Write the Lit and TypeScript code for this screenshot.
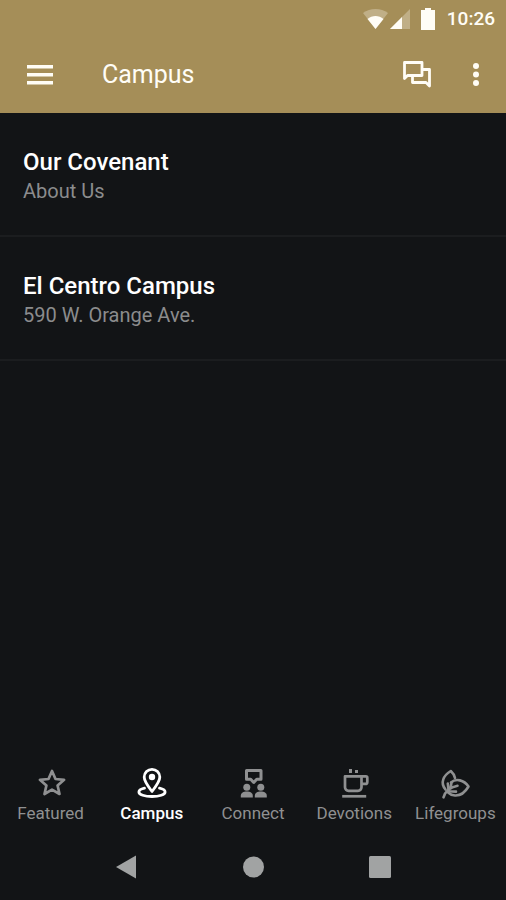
import { LitElement, html, css, svg, type TemplateResult } from "lit";
import { customElement, state } from "lit/decorators.js";
import { classMap } from "lit/directives/class-map.js";

interface Tab {
  label: string;
  icon: TemplateResult;
}

interface Entry {
  title: string;
  detail: string;
}

const entries: Entry[] = [
  { title: "Our Covenant", detail: "About Us" },
  { title: "El Centro Campus", detail: "590 W. Orange Ave." },
];

const star = svg`
  <path d="M17 4l3.500 8 8.600.8-6.500 5.700 1.900 8.500-7.500-4.400-7.500 4.400 1.900-8.500-6.500-5.700 8.600-.8z"
    fill="none" stroke="currentColor" stroke-width="2.700" stroke-linejoin="round" />`;

const pin = svg`
  <g fill="none" stroke="currentColor" stroke-width="2.800" stroke-linejoin="round" stroke-linecap="round">
    <path d="M16 24.500c-4-5.200-7.800-9.800-7.800-14.400a7.800 7.800 0 0 1 15.600 0c0 4.600-3.800 9.200-7.800 14.400z" />
    <path d="M8.500 21.200c-3.400.8-5.600 2-5.600 3.700 0 2.800 5.900 4.600 13.100 4.600s13.100-1.800 13.100-4.600c0-1.700-2.200-2.900-5.600-3.700" />
  </g>
  <circle cx="16" cy="10" r="3.200" fill="currentColor" />`;

const connect = svg`
  <path d="M9.500 3.500h14.500v8.800h-4.300l-3 3.200-3-3.200H9.500z" fill="none" stroke="currentColor"
    stroke-width="3" stroke-linejoin="round" />
  <g fill="currentColor">
    <circle cx="9.800" cy="20.200" r="3.500" />
    <circle cx="23.800" cy="20.200" r="3.500" />
    <path d="M3.800 30.500v-1.700c0-2.800 2.700-4.200 6-4.200s6 1.400 6 4.200v1.700z" />
    <path d="M17.800 30.500v-1.700c0-2.800 2.700-4.200 6-4.200s6 1.400 6 4.200v1.700z" />
  </g>`;

const cup = svg`
  <g fill="none" stroke="currentColor" stroke-width="2.700">
    <path d="M7 9.300h16.500v11a3.500 3.500 0 0 1-3.500 3.500h-9.500A3.500 3.500 0 0 1 7 20.300z" stroke-linejoin="round" />
    <path d="M23.500 9.300h4.400a1.400 1.400 0 0 1 1.400 1.400v4.200a2 2 0 0 1-2 2h-3.800" />
    <path d="M4.200 29.300h24" />
    <path d="M12.500 2v4M18.500 3v3" stroke-width="3" />
  </g>`;

const leaves = svg`
  <g fill="none" stroke="currentColor" stroke-width="2.600" stroke-linecap="round" stroke-linejoin="round">
    <path d="M6.500 22.500C.8 15.500 4.500 8.500 11.800 4c2 1.800 3.700 4.300 4.200 7" />
    <path d="M12 15.500c5-4.500 13-2.500 17.500 4-3.800 6.500-8.500 9.300-13.500 9-2.700-.1-5-1.200-6.800-3" />
    <path d="M4.500 30.300c1.500-5.300 5.500-9.800 14-11.600M8.800 16.500l.7 6.300M9.500 24.300l7.500.3M11.500 21.500l1-6" />
  </g>`;

const tabs: Tab[] = [
  { label: "Featured", icon: star },
  { label: "Campus", icon: pin },
  { label: "Connect", icon: connect },
  { label: "Devotions", icon: cup },
  { label: "Lifegroups", icon: leaves },
];

@customElement("app-root")
export class AppRoot extends LitElement {
  @state() private selected = "Campus";

  static styles = css`
    :host {
      display: flex;
      flex-direction: column;
      min-height: 100vh;
      background: #121416;
      color: #fff;
      font-family: Roboto, "Liberation Sans", sans-serif;
    }
    * {
      box-sizing: border-box;
    }
    svg {
      display: block;
    }
    button {
      display: flex;
      align-items: center;
      justify-content: center;
      margin: 0;
      padding: 0;
      border: 0;
      background: none;
      color: inherit;
      font: inherit;
      cursor: pointer;
    }
    .top {
      background: #a58e58;
      color: #fffdf6;
    }
    .status {
      display: flex;
      align-items: center;
      justify-content: flex-end;
      height: 37px;
      padding-right: 11px;
    }
    .clock {
      margin-left: 10px;
      font-size: 19px;
      font-weight: 500;
      line-height: 24px;
    }
    .bar {
      display: flex;
      align-items: center;
      height: 76px;
      padding: 0 12px 0 16px;
    }
    .action {
      width: 48px;
      height: 48px;
    }
    .more {
      width: 36px;
      margin-left: 17px;
    }
    .title {
      flex: 1;
      margin: 0 0 0 38px;
      font-size: 25px;
      font-weight: 400;
      line-height: 32px;
    }
    .list {
      flex: 1;
      margin: 0;
      padding: 0;
      list-style: none;
    }
    .entry {
      border-bottom: 2px solid #1b1d1f;
    }
    .link {
      display: block;
      padding: 35px 23px 29px;
      color: inherit;
      text-decoration: none;
    }
    .name {
      display: block;
      font-size: 24px;
      font-weight: 500;
      line-height: 28px;
    }
    .detail {
      display: block;
      color: #8b8c8d;
      font-size: 20px;
      line-height: 30px;
    }
    .tabs {
      display: grid;
      grid-template-columns: repeat(5, 1fr);
    }
    .tab {
      flex-direction: column;
      color: #8f9091;
      font-size: 17px;
      line-height: 20px;
      gap: 4px;
      height: 78px;
    }
    .active {
      color: #fff;
      font-weight: 500;
    }
    .system {
      display: grid;
      grid-template-columns: repeat(3, 25%);
      justify-content: center;
      height: 66px;
      color: #a1a3a3;
    }
  `;

  render() {
    return html`
      <header class="top">
        <div class="status">
          <svg width="74" height="24" viewBox="0 0 74 24" fill="currentColor" aria-hidden="true">
            <path d="M0 6C7 .5 18 .5 25 6L12.500 22z" opacity=".3" />
            <path d="M4.500 12c4.500-4 11.500-4 16 0l-8 10z" />
            <path d="M47 2v20H27z" opacity=".3" />
            <path d="M39 10v12H27z" />
            <path d="M58 3h4V1h6v2h4v20H58z" />
          </svg>
          <span class="clock">10:26</span>
        </div>
        <div class="bar">
          <button class="action" aria-label="Open menu">
            <svg width="28" height="20" viewBox="0 0 28 20" fill="currentColor">
              <path d="M1 0h26v3.500H1zM1 8h26v3.500H1zM1 16h26v3.500H1z" />
            </svg>
          </button>
          <h1 class="title">Campus</h1>
          <button class="action" aria-label="Messages">
            <svg width="30" height="30" viewBox="0 0 30 30" fill="none" stroke="currentColor"
              stroke-width="2.800" stroke-linejoin="round">
              <path d="M2.500 18.500V2.500h17.500v13H5.500z" />
              <path d="M20 9.500h7.500v16.500l-3.500-3.500H10.500V16" />
            </svg>
          </button>
          <button class="action more" aria-label="More options">
            <svg width="8" height="24" viewBox="0 0 8 24" fill="currentColor">
              <circle cx="4" cy="3" r="3" />
              <circle cx="4" cy="11.500" r="3" />
              <circle cx="4" cy="20" r="3" />
            </svg>
          </button>
        </div>
      </header>

      <ul class="list">
        ${entries.map(
          (entry) => html`
            <li class="entry">
              <a class="link" href="#">
                <span class="name">${entry.title}</span>
                <span class="detail">${entry.detail}</span>
              </a>
            </li>
          `,
        )}
      </ul>

      <nav class="tabs" aria-label="Sections">
        ${tabs.map(
          (tab) => html`
            <button
              class=${classMap({ tab: true, active: tab.label === this.selected })}
              @click=${() => (this.selected = tab.label)}
            >
              <svg width="32" height="32" viewBox="0 0 32 32" aria-hidden="true">${tab.icon}</svg>
              <span>${tab.label}</span>
            </button>
          `,
        )}
      </nav>

      <div class="system">
        <button aria-label="Back">
          <svg width="24" height="24" viewBox="0 0 24 24" fill="currentColor"><path d="M1 12L21 0.500v23z" /></svg>
        </button>
        <button aria-label="Home">
          <svg width="24" height="24" viewBox="0 0 24 24" fill="currentColor"><circle cx="12.500" cy="12" r="10.500" /></svg>
        </button>
        <button aria-label="Recent apps">
          <svg width="24" height="24" viewBox="0 0 24 24" fill="currentColor"><rect x="1" y="1" width="22" height="22" rx="1.500" /></svg>
        </button>
      </div>
    `;
  }
}
